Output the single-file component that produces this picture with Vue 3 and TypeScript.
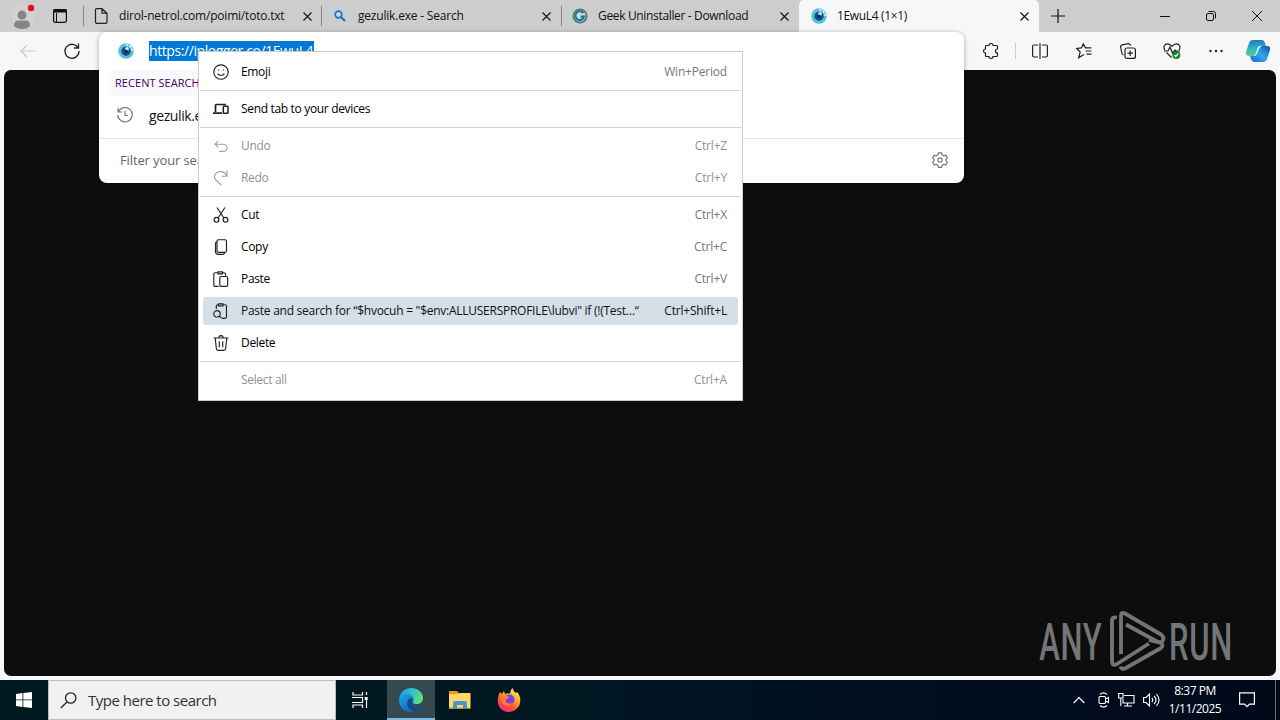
<script setup lang="ts">
interface Tab {
  title: string
  icon: 'file' | 'lens' | 'geek' | 'eye'
  width: number
  active?: boolean
}

interface MenuItem {
  label: string
  keys?: string
  icon?: string
  disabled?: boolean
  highlighted?: boolean
}

const tabs: Tab[] = [
  { title: 'dirol-netrol.com/poimi/toto.txt', icon: 'file', width: 239 },
  { title: 'gezulik.exe - Search', icon: 'lens', width: 239 },
  { title: 'Geek Uninstaller - Download', icon: 'geek', width: 238 },
  { title: '1EwuL4 (1×1)', icon: 'eye', width: 240, active: true },
]

const groups: MenuItem[][] = [
  [{ label: 'Emoji', keys: 'Win+Period', icon: 'emoji' }],
  [{ label: 'Send tab to your devices', icon: 'devices' }],
  [
    { label: 'Undo', keys: 'Ctrl+Z', icon: 'undo', disabled: true },
    { label: 'Redo', keys: 'Ctrl+Y', icon: 'redo', disabled: true },
  ],
  [
    { label: 'Cut', keys: 'Ctrl+X', icon: 'cut' },
    { label: 'Copy', keys: 'Ctrl+C', icon: 'copy' },
    { label: 'Paste', keys: 'Ctrl+V', icon: 'paste' },
    {
      label: 'Paste and search for “$hvocuh = "$env:ALLUSERSPROFILE\\lubvi" if (!(Test…“',
      keys: 'Ctrl+Shift+L',
      icon: 'pasteSearch',
      highlighted: true,
    },
    { label: 'Delete', icon: 'trash' },
  ],
  [{ label: 'Select all', keys: 'Ctrl+A', disabled: true }],
]

const paths: Record<string, string> = {
  emoji: 'M8 .8a7.2 7.2 0 1 0 0 14.4A7.2 7.2 0 0 0 8 .8M4.6 9.6c1.5 2.5 5.3 2.5 6.8 0M5.5 5.4v1.2M10.5 5.4v1.2',
  undo: 'M5 3.2 2 6.2l3 3M2.2 6.2h8.2a3.6 3.6 0 0 1 0 7.2H6.2',
  redo: 'M14 .8v5.4H8.6M13.8 6C11.5 1 6 .3 2.9 3.3c-2.6 2.6-1.6 5.2.4 7.2l5 4.7',
  cut: 'M4 .5l6.600 10M12 .5l-6.600 10M3.500 10.400a2.400 2.400 0 1 0 0 4.800 2.400 2.400 0 0 0 0-4.800M12.500 10.400a2.400 2.400 0 1 0 0 4.800 2.400 2.400 0 0 0 0-4.800',
  copy: 'M5.500.7h6.500q1.500 0 1.500 1.500v9.600q0 1.500-1.500 1.500H5.500Q4 13.300 4 11.800V2.200Q4 .7 5.500.7M4 2.500q-1.500.5-1.500 2v8q0 2.800 2.800 2.800h4.500q1.300 0 1.800-1.300',
  paste: 'M5 .8h4.500v2H5zM5 1.700H2Q.8 1.700.8 2.900v11Q.8 15.300 2 15.300h3.700M9.500 1.700H11q1.500 0 1.500 1.500v1.500M8.200 5.500h5q1.500 0 1.500 1.500v6.900q0 1.400-1.500 1.400h-5q-1.400 0-1.400-1.400V6.900q0-1.400 1.400-1.400',
  pasteSearch: 'M5.500.8H10v2H5.500zM5.500 1.700H4.800Q3.300 1.700 3.300 3.200V6M10 1.700h2q1.500 0 1.500 1.500v10.600q0 1.500-1.500 1.500H9M4 7.600a3.200 3.200 0 1 0 0 6.400 3.200 3.200 0 0 0 0-6.400M6.300 13l2.200 2.200',
  trash: 'M.6 3h14.800M5.700 2.800c.3-3 4.300-3 4.600 0M2.200 3.200l1.200 10.500q.2 1.600 1.600 1.600h6q1.400 0 1.600-1.600l1.200-10.500M6.300 6.300v6M9.700 6.300v6',
}
</script>

<template>
  <div class="screen">
    <header class="tabstrip">
      <div class="profile">
        <svg width="24" height="26" viewBox="0 0 24 26">
          <circle cx="12" cy="13" r="11.500" fill="#d2d2d2" />
          <circle cx="11" cy="12" r="4.500" fill="#858585" />
          <path d="M3 23q0-5.500 4-5.500h8q4 0 4 5.500-3 3-8 3t-8-3z" fill="#858585" />
          <circle cx="20" cy="5" r="3.200" fill="#e0131c" />
        </svg>
      </div>
      <svg class="tab-actions" width="16" height="16" viewBox="0 0 16 16">
        <rect x="1.600" y="1.600" width="12.800" height="12.800" rx="1.800" fill="none" stroke="#111" stroke-width="1.300" />
        <path d="M1 4.500V3q0-2 2-2h10q2 0 2 2v1.500z" fill="#111" />
        <path d="M4.500 5v9.500" stroke="#111" />
      </svg>
      <div
        v-for="tab in tabs"
        :key="tab.title"
        class="tab"
        :class="[tab.icon, { active: tab.active }]"
        :style="{ width: tab.width + 'px' }"
      >
        <svg v-if="tab.icon === 'file'" width="16" height="16" viewBox="0 0 16 16" fill="none" stroke="#222" stroke-width="1.200">
          <path d="M2.500 1.500q0-.8 1-.8h5.500l5 4.500V14q0 1.300-1.300 1.300H3.800q-1.300 0-1.300-1.300zM9 .7V5.200h5" />
        </svg>
        <svg v-else-if="tab.icon === 'lens'" width="16" height="16" viewBox="0 0 16 16" fill="none" stroke="#1f70bd">
          <circle cx="6.500" cy="6.500" r="3.300" stroke-width="1.700" fill="#bcdaf0" />
          <path d="M9 9l4 4" stroke-width="2.200" />
        </svg>
        <svg v-else-if="tab.icon === 'geek'" width="16" height="16" viewBox="0 0 16 16">
          <circle cx="8" cy="8" r="7.600" fill="#617582" />
          <circle cx="8" cy="8" r="5.600" fill="#c4dfe3" />
          <path d="M11.300 5.200A4.300 4.300 0 1 0 12 8.500H8.500" fill="none" stroke="#167786" stroke-width="2" />
        </svg>
        <svg v-else width="16" height="16" viewBox="0 0 16 16">
          <circle cx="8" cy="8" r="6.500" fill="#8fdcf2" stroke="#4fc0e6" stroke-width="2.600" />
          <path d="M8 1.500A6.500 6.500 0 0 1 14.500 8" fill="none" stroke="#b9ecf8" stroke-width="2.600" stroke-dasharray="2.500 1.200" />
          <circle cx="8" cy="8.200" r="4.800" fill="#174f86" />
          <circle cx="9" cy="6" r="1.900" fill="#d5f3fb" />
          <circle cx="8" cy="8.500" r="2" fill="#0d335f" />
        </svg>
        <span class="tab-title">{{ tab.title }}</span>
        <svg width="9" height="9" viewBox="0 0 9 9"><path d="M.5.5l8 8m0-8l-8 8" stroke="#111" stroke-width="1.100" /></svg>
      </div>
      <svg class="new-tab" width="14" height="14" viewBox="0 0 14 14"><path d="M7 0v14M0 7h14" stroke="#111" stroke-width="1.200" /></svg>
      <div class="window-buttons">
        <svg width="10" height="10" viewBox="0 0 10 10"><path d="M0 5.500h10" stroke="#111" /></svg>
        <svg width="10" height="10" viewBox="0 0 10 10" fill="none" stroke="#111"><rect x=".5" y="2.500" width="7" height="7" rx="1.500" /><path d="M2.500.5H7.500q2 0 2 2v5" /></svg>
        <svg width="10" height="10" viewBox="0 0 10 10"><path d="M0 0l10 10M10 0L0 10" stroke="#111" /></svg>
      </div>
    </header>

    <div class="toolbar">
      <svg class="back" width="16" height="14" viewBox="0 0 16 14" fill="none" stroke="#cacaca" stroke-width="1.200"><path d="M16 7H1M7 1L1 7l6 6" /></svg>
      <svg class="reload" width="16" height="16" viewBox="0 0 16 16" fill="none" stroke="#222" stroke-width="1.300"><path d="M14.200 5A7 7 0 1 0 15 8M14.500.5V5H10" /></svg>
      <div class="tools">
        <svg width="16" height="16" viewBox="0 0 16 16"><path d="M3.500 2.500H6a2 2 0 0 1 4 0h3.500q1 0 1 1V6a2 2 0 1 0 0 4v2.500q0 1-1 1H10a2 2 0 0 1-4 0H3.500q-1 0-1-1V10a2 2 0 1 1 0-4V3.500q0-1 1-1z" /></svg>
        <i class="tool-separator" />
        <svg width="16" height="16" viewBox="0 0 16 16"><path d="M6 2H2Q.6 2 .6 3.500v9Q.6 14 2 14h4M8 0v16M10 2h4q1.400 0 1.400 1.500v9Q15.400 14 14 14h-4" /></svg>
        <svg width="16" height="16" viewBox="0 0 16 16"><path d="M8 11.500l-5.300 3.300 1.500-5.800L.6 5.500l4.800-.6L7.300.8l2.200 4.100h5.800M9.500 8h6M10.500 11.200h5" /></svg>
        <svg width="16" height="16" viewBox="0 0 16 16"><rect x="5" y="5" width="10.400" height="10.400" rx="2" /><path d="M10.200 7.500v5.500M7.500 10.200H13M3.500 12Q2 11.500 1.800 10L.6 4Q.5 2.200 2.200 1.800l6-1.200Q10 .5 10.800 2.600" /></svg>
        <svg class="health" width="18" height="16" viewBox="0 0 18 16"><path d="M2 7C-.5 4 2 .8 4.500.8 6.500.8 8 2.500 9 3.300 10 2 11.500.8 13.500.8 16 .8 18.300 3.800 16 7M3.500 9.500l5 5M1 8h4l2-4 2.500 6L12 7l1.500 1H17" /><circle class="health-badge" cx="13.300" cy="12" r="4" /><path class="health-check" d="M11.300 12l1.500 1.500 2.500-3" /></svg>
        <svg class="more" width="16" height="16" viewBox="0 0 16 16"><circle cx="2.500" cy="8" r="1.200" /><circle cx="8" cy="8" r="1.200" /><circle cx="13.500" cy="8" r="1.200" /></svg>
        <svg class="copilot" width="24" height="22" viewBox="0 0 24 22">
          <defs>
            <linearGradient id="copilot-left" x1="0" y1="0" x2="0" y2="1"><stop stop-color="#2378c5" /><stop offset=".5" stop-color="#2cb6c4" /><stop offset="1" stop-color="#58d18a" /></linearGradient>
            <linearGradient id="copilot-right" x1="1" y1="0" x2="0" y2="1"><stop stop-color="#1a4cb0" /><stop offset=".5" stop-color="#33a8ed" /><stop offset="1" stop-color="#1767dc" /></linearGradient>
          </defs>
          <path d="M7 0h9q2 0 3 3l1 3h-4q-2 0-3 3l-2 5q-1 2-3 2H3q-4 0-3-4l3-9q1-3 4-3z" fill="url(#copilot-left)" />
          <path d="M17 22H8q-2 0-3-3l-1-3h4q2 0 3-3l2-5q1-2 3-2h5q4 0 3 4l-3 9q-1 3-4 3z" fill="url(#copilot-right)" />
          <path d="M13 6h2.500q-2 1-3 4l-2 4q-.6 1.500-1.800 2H7.500q1.800-.5 2.500-3l1.500-4.500Q12 6.500 13 6z" fill="#fff" />
        </svg>
      </div>
    </div>

    <main class="page">
      <svg width="196" height="64" viewBox="0 0 196 64">
        <g fill="#757575" font-family="Roboto, 'Liberation Sans', sans-serif" font-size="52.500" font-weight="500">
          <text x="2" y="51" textLength="106" transform="translate(1 0) scale(.59 1)">ANY</text>
          <text x="0" y="51" textLength="107" transform="translate(132 0) scale(.59 1)">RUN</text>
        </g>
        <g fill="none" stroke="#757575" stroke-width="3.800" stroke-linejoin="round">
          <path d="M80 8.500q-5-1-5 3v41q0 5 5 2.500l32-20.500" />
          <path d="M84 45V6.500q0-4 4-2l36 21q4 3 1.500 6.500-2 2-5.500.500L89 15.500" />
          <path d="M112 31l12 3q3 2 0 5L88 59.500q-3.500 1.500-4.500-2" />
        </g>
      </svg>
    </main>

    <section class="omnibox">
      <div class="address">
        <svg width="16" height="16" viewBox="0 0 16 16">
          <circle cx="8" cy="8" r="6.500" fill="#8fdcf2" stroke="#4fc0e6" stroke-width="2.600" />
          <path d="M8 1.500A6.500 6.500 0 0 1 14.500 8" fill="none" stroke="#b9ecf8" stroke-width="2.600" stroke-dasharray="2.500 1.200" />
          <circle cx="8" cy="8.200" r="4.800" fill="#174f86" />
          <circle cx="9" cy="6" r="1.900" fill="#d5f3fb" />
          <circle cx="8" cy="8.500" r="2" fill="#0d335f" />
        </svg>
        <span class="url">https://iplogger.co/1EwuL4</span>
      </div>
      <div class="recent">RECENT SEARCHES</div>
      <div class="suggestion">
        <svg width="16" height="16" viewBox="0 0 16 16" fill="none" stroke="#777" stroke-width="1.200"><path d="M1 1v4h4M1.300 5A7.200 7.200 0 1 1 .8 8M8 4v4.500h3" /></svg>
        <span>gezulik.exe</span>
      </div>
      <div class="filter">
        <span>Filter your search</span>
        <svg width="16" height="16" viewBox="0 0 16 16" fill="none" stroke="#777" stroke-width="1.200"><path d="M6.500.8h3l.6 2 1.700 1 2.100-.5 1.500 2.600L14 7.400v1.400l1.400 1.400-1.500 2.600-2.100-.5-1.700 1-.6 2h-3l-.6-2-1.700-1-2.100.5L.6 10.200 2 8.800V7.400L.6 5.900l1.500-2.600 2.100.5 1.700-1z" /><circle cx="8" cy="8" r="2.200" /></svg>
      </div>
    </section>

    <nav class="context-menu">
      <div v-for="(group, index) in groups" :key="index" class="menu-group">
        <div v-for="item in group" :key="item.label" class="menu-item" :class="{ disabled: item.disabled, highlighted: item.highlighted }">
          <svg width="16" height="16" viewBox="0 0 16 16">
            <g v-if="item.icon === 'devices'">
              <path d="M2.500 11V4.200q0-.7.700-.7H13M0 12.200h9" stroke-width="1.700" />
              <rect x="10.300" y="5.300" width="4.700" height="7" rx=".6" stroke-width="1.500" />
            </g>
            <path v-else-if="item.icon" :d="paths[item.icon]" />
          </svg>
          <span class="label">{{ item.label }}</span>
          <span class="keys">{{ item.keys }}</span>
        </div>
      </div>
    </nav>

    <footer class="taskbar">
      <div class="start">
        <svg width="16" height="16" viewBox="0 0 16 16" fill="#fff"><path d="M0 2l6.500-1v6.500H0zM7.300.9L16 0v7.500H7.300zM0 8.300h6.500V15L0 14zM7.300 8.300H16V16l-8.700-1z" /></svg>
      </div>
      <div class="search-box">
        <svg width="17" height="17" viewBox="0 0 17 17" fill="none" stroke="#222" stroke-width="1.300"><circle cx="10.700" cy="6" r="5.200" /><path d="M7 10L.8 16" /></svg>
        <span>Type here to search</span>
      </div>
      <div class="task-button">
        <svg width="16" height="16" viewBox="0 0 16 16" fill="none" stroke="#fff" stroke-width="1.200"><path d="M1 0v3h9.500V0M1 16v-3h9.500v3M0 5.500h10.500v5H0M14.500 0v3M14.500 8v8" /><path d="M12.700 5h3v3h-3z" fill="#fff" stroke="none" /></svg>
      </div>
      <div class="task-button running">
        <svg width="24" height="24" viewBox="0 0 24 24">
          <defs>
            <linearGradient id="edge-top" x1="0" y1=".3" x2="1" y2=".6"><stop stop-color="#229ee2" /><stop offset=".5" stop-color="#2dc5d1" /><stop offset="1" stop-color="#6be066" /></linearGradient>
            <linearGradient id="edge-side" x1="0" y1="0" x2=".8" y2="1"><stop stop-color="#1da5ea" /><stop offset="1" stop-color="#1160b5" /></linearGradient>
          </defs>
          <path d="M0 11C1 4 6 0 12 0c8 0 12 5.500 12 10 0 4-3 6-6.500 6-3 0-4.500-1-3.500-2.500L8 12z" fill="url(#edge-top)" />
          <path d="M0 12c0-6 7-8 11-5.500 3 1.500 4.500 4 3.500 6.500-3 3-.5 6 3.500 6 2 0 3.500-.7 4.500-.7C20 22 16 24 12 24 5 24 0 19 0 12z" fill="url(#edge-side)" />
          <path d="M10.500 10.500C6 14 8 21 14.500 23.500c3.500-.8 6-2.700 7.500-4.700-5 1.500-9-.5-9-4 0-1 .7-1.500 1-2.300-.3-1.700-1.700-2.500-3.500-2z" fill="#134a89" />
        </svg>
      </div>
      <div class="task-button">
        <svg width="22" height="18" viewBox="0 0 22 18"><path d="M0 0h8l2 2h11v3H0z" fill="#e59a24" /><path d="M0 3h9l2-1h10.500v15.500H0z" fill="#ffd867" /><path d="M4 17.500V12q0-2 2-2h10q2 0 2 2v5.500h-4V14H8v3.500z" fill="#4396d1" /><path d="M0 16h4v1.500H0zM8 16h6v1.500H8z" fill="#efb846" /></svg>
      </div>
      <div class="task-button">
        <svg width="24" height="24" viewBox="0 0 24 24">
          <defs><linearGradient id="fox-flame" x1=".8" y1="0" x2=".2" y2="1"><stop stop-color="#fff44f" /><stop offset=".35" stop-color="#ffae29" /><stop offset=".65" stop-color="#ff5434" /><stop offset="1" stop-color="#ef2588" /></linearGradient></defs>
          <path d="M3 4q1 1 1.500 2L7 3l1 3q2-1 5-.5Q13 2 15.500 0q.5 3 3.500 5l1-1c4 4 4 10 2 14-4 7-14 8-19 2C-.5 15 .5 8 3 4z" fill="url(#fox-flame)" />
          <circle cx="12.500" cy="11.500" r="5" fill="#7b3de5" /><path d="M4 9q3-2.500 6-1l2.500 1-2 2q-2.500.5-1.500 3 3 3 6 0-1 4-5 4C6 18 4 13 4 9z" fill="#ff7c30" />
        </svg>
      </div>
      <div class="tray">
        <svg width="12" height="8" viewBox="0 0 12 8" fill="none" stroke="#fff" stroke-width="1.200"><path d="M.7 7L6 1.500 11.300 7" /></svg>
        <svg class="meet" width="12" height="16" viewBox="0 0 12 16" fill="none" stroke="#fff" stroke-width="1.100"><rect x="1" y="4.500" width="6.500" height="7" rx="1" /><path d="M7.500 7l3-1.500v5L7.500 9M2 2.500Q5.500-.7 9 2.500M2 13.500q3.500 3.200 7 0" /></svg>
        <svg class="network" width="17" height="16" viewBox="0 0 17 16" fill="none" stroke="#fff" stroke-width="1.100"><path d="M6 3.500h10v7.500H5V7M9.500 11v2.500M6 14h8M.7 1.500H5V6H.7zM2.800 6v8" /></svg>
        <svg class="volume" width="17" height="14" viewBox="0 0 17 14" fill="none" stroke="#fff" stroke-width="1.100"><path d="M.6 4.500h2.500L6.500 1v12L3.100 9.500H.6zM8.800 4.800q2 2.200 0 4.400M11 3q4 4 0 8M13.300 1q5.500 6 0 12" /></svg>
        <div class="clock"><span>8:37 PM</span><span>1/11/2025</span></div>
        <svg width="16" height="16" viewBox="0 0 16 16" fill="none" stroke="#fff" stroke-width="1.200"><path d="M.6.8h14.800v11.400H10.500L8 14.700 5.500 12.200H.6z" /></svg>
        <i class="show-desktop" />
      </div>
    </footer>
  </div>
</template>

<style>
html,
body {
  margin: 0;
  overflow: hidden;
}
</style>

<style scoped>
* { box-sizing: border-box; }
svg { display: block; flex: none; }
.screen {
  position: relative;
  display: flex;
  flex-direction: column;
  width: 1280px;
  height: 720px;
  overflow: hidden;
  background: #f7f7f7;
  color: #111;
  font-family: 'Open Sans', 'Noto Sans', sans-serif;
  font-size: 12px;
  white-space: nowrap;
}
.tabstrip { display: flex; align-items: center; flex: none; height: 32px; background: #cdcdcd; }
.profile { width: 52px; padding-left: 11px; }
.tab-actions { margin-right: 15px; }
.tab { display: flex; align-items: center; height: 32px; padding: 0 10px; letter-spacing: -.34px; }
.tab:not(.active)::before { content: ''; width: 1px; height: 20px; background: #858585; margin-left: -10px; margin-right: 10px; }
.tab.file::before { margin-right: 9px; }
.tab.lens::before { margin-left: -11px; }
.tab.active { background: #f7f7f7; border-radius: 5px 5px 0 0; padding-left: 12px; }
.tab-title { flex: 1; margin-left: 10px; padding-bottom: 1px; }
.tab.file .tab-title, .tab.lens .tab-title { letter-spacing: -.2px; }
.new-tab { margin-left: 12px; }
.window-buttons { display: flex; gap: 36px; margin-left: auto; margin-right: 18px; }
.toolbar { display: flex; align-items: center; flex: none; height: 38px; background: #f7f7f7; }
.back { margin-left: 20px; }
.reload { margin-left: 28px; }
.tools { display: flex; align-items: center; margin-left: auto; margin-right: 10px; gap: 28px; }
.tools > svg { fill: none; stroke: #222; stroke-width: 1.2; }
.tool-separator { width: 1px; height: 16px; background: #ccc; margin: 0 -12px; }
.tools .health { margin: 0 -1px; }
.tools .health-badge { fill: #16811c; stroke: none; }
.tools .health-check { stroke: #fff; }
.tools .more { fill: #222; stroke: none; }
.tools .copilot { stroke: none; margin-left: -6px; }
.page { height: 606px; flex: none; margin: 0 4px 4px; border-radius: 7px; background: #0d0d0d; display: flex; align-items: flex-end; justify-content: flex-end; padding: 0 43px 3px 0; }
.omnibox { position: absolute; left: 99px; top: 32px; width: 865px; height: 151px; background: #fff; border-radius: 8px; box-shadow: 0 1px 5px #0005; }
.address { display: flex; align-items: center; height: 38px; padding-left: 19px; }
.url { height: 20px; line-height: 20px; margin-left: 15px; background: #0078d7; color: #fff; font-size: 14px; width: 165px; letter-spacing: -.42px; }
.recent { width: 101px; height: 26px; margin-left: 10px; padding-left: 6px; background: #faf8fb; line-height: 26px; color: #440063; font-size: 11px; letter-spacing: .05px; overflow: hidden; }
.suggestion { height: 42px; display: flex; align-items: center; padding: 0 0 4px 18px; font-size: 14px; letter-spacing: -.4px; }
.suggestion span { margin-left: 16px; }
.filter { display: flex; align-items: center; justify-content: space-between; height: 45px; border-top: 1px solid #e7e7e7; padding: 0 16px 2px 21px; color: #666; font-size: 13px; letter-spacing: -.12px; }
.context-menu { position: absolute; left: 198px; top: 51px; width: 545px; height: 350px; padding-top: 4px; border: 1px solid #ccc; background: #fff; color: #000; }
.menu-group + .menu-group { border-top: 1px solid #d2d2d2; margin: 2px 1px 0; padding: 2px 0 0; }
.menu-item { display: flex; align-items: center; height: 32px; padding: 0 14px 0 13px; margin: 0 1px; letter-spacing: -.33px; }
.menu-group + .menu-group .menu-item { margin: 0; }
.menu-item svg { fill: none; stroke: #222; stroke-width: 1.15; }
.label { flex: 1; margin-left: 12px; padding-bottom: 1px; }
.keys { color: #777; letter-spacing: -.2px; padding-bottom: 1px; }
.disabled { color: #929292; }
.disabled svg { stroke: #a0a0a0; }
.disabled .keys { color: #929292; }
.menu-group + .menu-group .menu-item.highlighted { height: 28px; margin: 2px 3px; padding: 0 11px 0 10px; background: #d4dfe8; border-radius: 3px; color: #111; letter-spacing: -.26px; }
.highlighted .keys { color: #111; }
.taskbar { display: flex; height: 40px; flex: none; background: linear-gradient(90deg, #001a22 0%, #001722 45%, #000b1e 80%, #000a19 100%); color: #fff; }
.start { width: 48px; display: flex; align-items: center; padding-left: 16px; }
.search-box { width: 288px; display: flex; align-items: center; padding-left: 11px; border: 1px solid #bdbdbd; background: #f1f1f1; color: #333; font-size: 15px; letter-spacing: -.5px; }
.search-box span { margin-left: 11px; }
.task-button { width: 49px; height: 40px; display: flex; align-items: center; justify-content: center; }
.task-button:nth-child(3) { width: 51px; padding-right: 3px; }
.task-button.running { width: 48px; background: #354950; border-bottom: 2px solid #76b9ed; padding-top: 2px; }
.tray { margin-left: auto; display: flex; align-items: center; gap: 7px; }
.meet { margin-left: 6px; }
.network { margin-left: 1px; }
.volume { margin-left: 1px; }
.clock { display: flex; flex-direction: column; align-items: center; width: 56px; line-height: 18px; font-size: 12px; letter-spacing: -.48px; }
.tray .clock + svg { margin-left: 9px; }
.show-desktop { height: 40px; width: 5px; margin-left: 13px; border-left: 1px solid #68717b; }
</style>
